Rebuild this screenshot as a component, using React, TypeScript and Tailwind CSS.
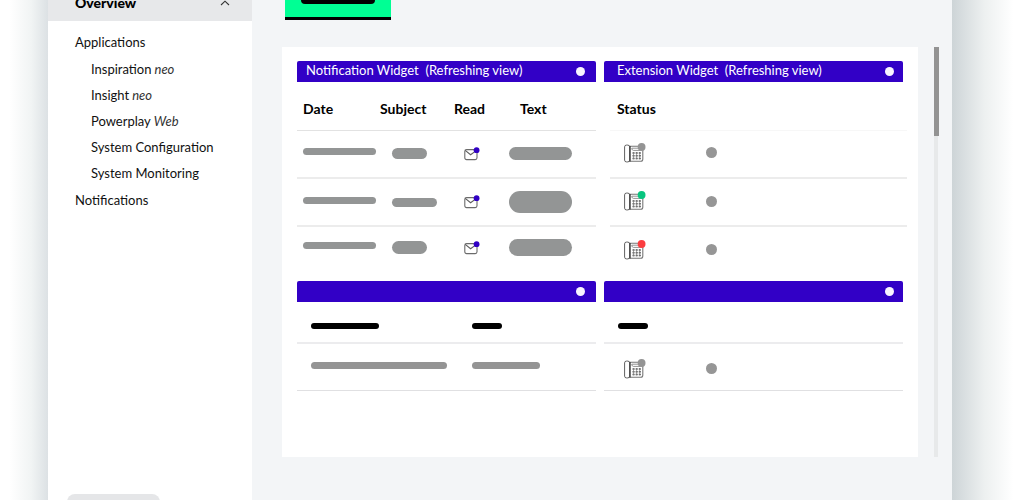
import clsx from "clsx";
import { ReactNode } from "react";

type NavItem = { label: string; suffix?: string };

const applications: NavItem[] = [
  { label: "Inspiration", suffix: "neo" },
  { label: "Insight", suffix: "neo" },
  { label: "Powerplay", suffix: "Web" },
  { label: "System Configuration" },
  { label: "System Monitoring" },
];

const notifications = [
  { id: 1, subject: "h-[11px] w-[35px]", text: "h-[13px]" },
  { id: 2, subject: "h-[9px] w-[45px]", text: "h-[22px]" },
  { id: 3, subject: "h-[13px] w-[35px]", text: "h-[17px]" },
];

const extensions = [
  { id: 1, color: "#949494" },
  { id: 2, color: "#08c57f" },
  { id: 3, color: "#fb3d40" },
];

const Bar = ({ className }: { className: string }) => (
  <div className={clsx("rounded-full", className)} />
);

const Dot = () => <div className="size-[11px] rounded-full bg-[#969696]" />;

const MailIcon = () => (
  <svg width="16" height="14" viewBox="0 0 16 14" fill="none">
    <rect
      x="0.8"
      y="2.6"
      width="12.2"
      height="10"
      rx="1.8"
      stroke="#6b6b6b"
      strokeWidth="1.1"
    />
    <path d="M1.2 3.4L6.6 7.8L12.2 3.6" stroke="#5c5c5c" strokeWidth="1.1" />
    <circle cx="12.6" cy="3.2" r="2.9" fill="#3000c4" />
  </svg>
);

const PhoneIcon = ({ color }: { color: string }) => (
  <svg width="22" height="20" viewBox="0 0 22 20" fill="none">
    <rect
      x="0.6"
      y="2.1"
      width="5"
      height="16.8"
      rx="1.8"
      stroke="#5f5f5f"
      strokeWidth="1"
    />
    <path
      d="M5.6 3.2H17.2C18.2 3.2 18.8 3.8 18.8 4.8V16.2C18.8 17.6 18.2 18.2 16.8 18.2H5.6Z"
      stroke="#777777"
      strokeWidth="1.1"
    />
    <path d="M6 3V18.4" stroke="#3c3c3c" strokeWidth="1.3" />
    <path
      d="M7.8 5.2H16.6V7.4H9.4L7.8 6.4Z"
      stroke="#777777"
      strokeWidth="0.8"
    />
    <path
      d="M8.6 10H16.8M8.6 12.8H16.8M8.6 15.6H16.8"
      stroke="#3a3a3a"
      strokeWidth="1.5"
      strokeDasharray="1.9 1.2"
    />
    <path
      d="M9.5 9.4V16.2M12.6 9.4V16.2M15.7 9.4V16.2"
      stroke="#8a8a8a"
      strokeWidth="0.8"
    />
    <circle cx="17.6" cy="4" r="3.9" fill={color} />
  </svg>
);

const Widget = ({
  title,
  className,
  headerClassName = "pr-[11px] pl-[9px]",
  children,
}: {
  title?: string;
  className?: string;
  headerClassName?: string;
  children: ReactNode;
}) => (
  <section className={className}>
    <header
      className={clsx(
        "flex h-[21px] items-center justify-between rounded-t-xs bg-[#3200c6] text-white",
        headerClassName,
      )}
    >
      <h2 className="pb-0.5 text-[13px] leading-[19px] whitespace-pre">
        {title}
      </h2>
      <span className="size-[9px] rounded-full bg-[#f8f4ff]" />
    </header>
    {children}
  </section>
);

const NotificationTable = () => (
  <table className="w-full table-fixed text-left">
    <thead>
      <tr className="h-12 border-b border-[#e2e2e2] text-sm">
        <th className="w-[83px] pt-1.5 pl-1.5">Date</th>
        <th className="w-[74px] pt-1.5">Subject</th>
        <th className="w-[55px] pt-1.5">Read</th>
        <th className="pt-1.5 pl-[11px]">Text</th>
      </tr>
    </thead>
    <tbody>
      {notifications.map(({ id, subject, text }) => (
        <tr
          key={id}
          className="h-12 border-b-2 border-[#ececec] last:h-[42px] last:border-b-0"
        >
          <td className="pb-1 pl-1.5">
            <Bar className="h-[7px] w-[73px] bg-[#939595]" />
          </td>
          <td className="pl-3">
            <Bar className={clsx("bg-[#939595]", subject)} />
          </td>
          <td className="pl-2.5">
            <MailIcon />
          </td>
          <td>
            <Bar className={clsx("w-[63px] bg-[#939595]", text)} />
          </td>
        </tr>
      ))}
    </tbody>
  </table>
);

const ExtensionTable = () => (
  <div className="-mr-1 ml-1.5">
    <table className="w-full table-fixed text-left">
      <thead>
        <tr className="h-12 border-b border-[#f7f7f7] text-sm">
          <th className="w-24 pt-1.5 pl-[7px]">Status</th>
          <th />
        </tr>
      </thead>
      <tbody>
        {extensions.map(({ id, color }) => (
          <tr
            key={id}
            className="h-12 border-b-2 border-[#ececec] last:border-b-0"
          >
            <td className="pb-0.5 pl-3.5">
              <PhoneIcon color={color} />
            </td>
            <td className="pb-0.5">
              <Dot />
            </td>
          </tr>
        ))}
      </tbody>
    </table>
  </div>
);

const Sidebar = () => (
  <aside className="flex w-[204px] shrink-0 flex-col bg-white">
    <button className="-mt-4 flex h-[37px] shrink-0 items-center justify-between bg-[#e7e8ea] pr-[22px] pl-[27px] text-sm font-black text-black">
      Overview
      <svg width="10" height="6" viewBox="0 0 10 6" fill="none">
        <path d="M1 5L5 1.2L9 5" stroke="#333333" strokeWidth="1.1" />
      </svg>
    </button>
    <nav className="pt-2 pl-[27px] text-[13px] leading-[26px]">
      <a href="#applications">Applications</a>
      <ul className="py-px pl-4">
        {applications.map(({ label, suffix }) => (
          <li key={label}>
            <a href="#applications">
              {label}
              {suffix && <em className="text-[#333333]"> {suffix}</em>}
            </a>
          </li>
        ))}
      </ul>
      <a href="#notifications">Notifications</a>
    </nav>
    <button
      aria-label="Log out"
      className="mt-auto -mb-6 ml-[19px] h-[30px] w-[93px] shrink-0 rounded-lg bg-[#e5e6e8]"
    />
  </aside>
);

const App = () => {
  return (
    <div className="flex h-screen overflow-hidden bg-white font-['Lato','Liberation_Sans',sans-serif] text-[#111111]">
      <div className="w-12 shrink-0 bg-linear-to-r from-white from-20% via-[#f1f4f4] via-65% to-[#dce1e4]" />
      <Sidebar />
      <main className="flex min-w-0 flex-1 flex-col items-start bg-[#f3f5f7] pr-3.5 pl-[30px]">
        <button
          aria-label="Add widget"
          className="-mt-[18px] ml-[3px] flex h-[38px] w-[106px] shrink-0 items-center justify-center border-b-3 border-black bg-[#00ff94]"
        >
          <Bar className="h-2 w-[74px] bg-black" />
        </button>
        <div className="mt-[27px] flex w-full gap-4">
          <div className="grid flex-1 grid-cols-2 gap-x-2 bg-white px-[15px] pt-3.5 pb-[66px] text-black">
            <Widget title="Notification Widget  (Refreshing view)">
              <NotificationTable />
            </Widget>
            <Widget
              title="Extension Widget  (Refreshing view)"
              headerClassName="pr-[9px] pl-[13px]"
            >
              <ExtensionTable />
            </Widget>
            <Widget className="mt-[7px]">
              <table className="w-full table-fixed">
                <thead>
                  <tr className="h-[41px] border-b-2 border-[#ececee]">
                    <th className="w-[175px] pt-2 pl-3.5">
                      <Bar className="h-1.5 w-[68px] bg-black" />
                    </th>
                    <th className="pt-2">
                      <Bar className="h-1.5 w-[30px] bg-black" />
                    </th>
                  </tr>
                </thead>
                <tbody>
                  <tr className="h-[47px] border-b border-[#e0e0e2]">
                    <td className="pb-0.5 pl-3.5">
                      <Bar className="h-[7px] w-[136px] bg-[#949494]" />
                    </td>
                    <td className="pb-0.5">
                      <Bar className="h-[7px] w-[68px] bg-[#949494]" />
                    </td>
                  </tr>
                </tbody>
              </table>
            </Widget>
            <Widget className="mt-[7px]" headerClassName="pr-[9px] pl-[13px]">
              <table className="w-full table-fixed">
                <thead>
                  <tr className="h-[41px] border-b-2 border-[#ececee]">
                    <th className="w-[102px] pt-2 pl-3.5">
                      <Bar className="h-1.5 w-[30px] bg-black" />
                    </th>
                    <th />
                  </tr>
                </thead>
                <tbody>
                  <tr className="h-[47px] border-b border-[#e0e0e2]">
                    <td className="pt-1 pl-5">
                      <PhoneIcon color="#949494" />
                    </td>
                    <td className="pt-1">
                      <Dot />
                    </td>
                  </tr>
                </tbody>
              </table>
            </Widget>
          </div>
          <div className="flex w-1 flex-col items-center bg-[#e7e9ea]">
            <div className="h-[89px] w-[5px] bg-[#939393]" />
          </div>
        </div>
      </main>
      <div className="w-[72px] shrink-0 bg-linear-to-r from-[#cdd4d7] via-[#edf0f0] via-45% to-white to-85%" />
    </div>
  );
};

export default App;
